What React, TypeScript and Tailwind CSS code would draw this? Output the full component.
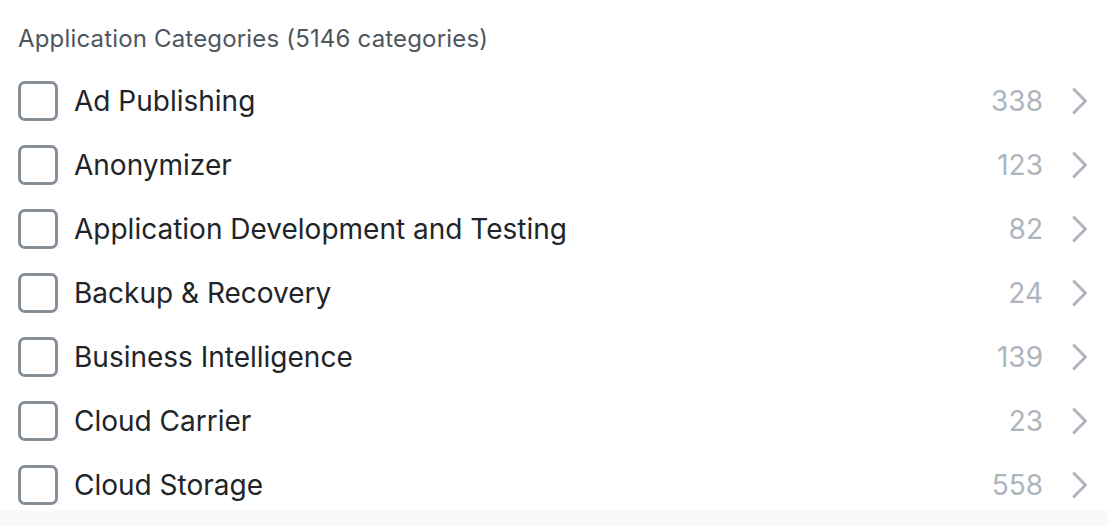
const categories = [
  { name: "Ad Publishing", count: 338 },
  { name: "Anonymizer", count: 123 },
  { name: "Application Development and Testing", count: 82 },
  { name: "Backup & Recovery", count: 24 },
  { name: "Business Intelligence", count: 139 },
  { name: "Cloud Carrier", count: 23 },
  { name: "Cloud Storage", count: 558 },
];

function Chevron() {
  return (
    <svg width="18" height="28" viewBox="0 0 18 28" fill="none" className="shrink-0">
      <polyline
        points="3,2.5 14.5,14 3,25.5"
        stroke="#adb5bd"
        strokeWidth="3"
        strokeLinecap="round"
        strokeLinejoin="round"
      />
    </svg>
  );
}

export default function App() {
  return (
    <div className="min-h-[526px] bg-[#f8f9fa] font-['Inter',sans-serif]">
      <div className="h-[510px] bg-white pl-[18px] pr-[19px]">
        <div className="pt-[24px] pb-[15px] text-[24px] leading-[30px] tracking-[0.17px] text-[#4f565e]">
          Application Categories (5146 categories)
        </div>
        <ul>
          {categories.map((c) => (
            <li key={c.name} className="flex h-[64px] items-center">
              <span className="h-[40px] w-[40px] shrink-0 rounded-[7px] border-[3px] border-[#868e96]" />
              <span className="ml-[16px] flex-1 text-[28px] text-[#212529]">{c.name}</span>
              <span className="text-[28px] text-[#adb5bd]">{c.count}</span>
              <span className="ml-[28px]">
                <Chevron />
              </span>
            </li>
          ))}
        </ul>
      </div>
    </div>
  );
}
